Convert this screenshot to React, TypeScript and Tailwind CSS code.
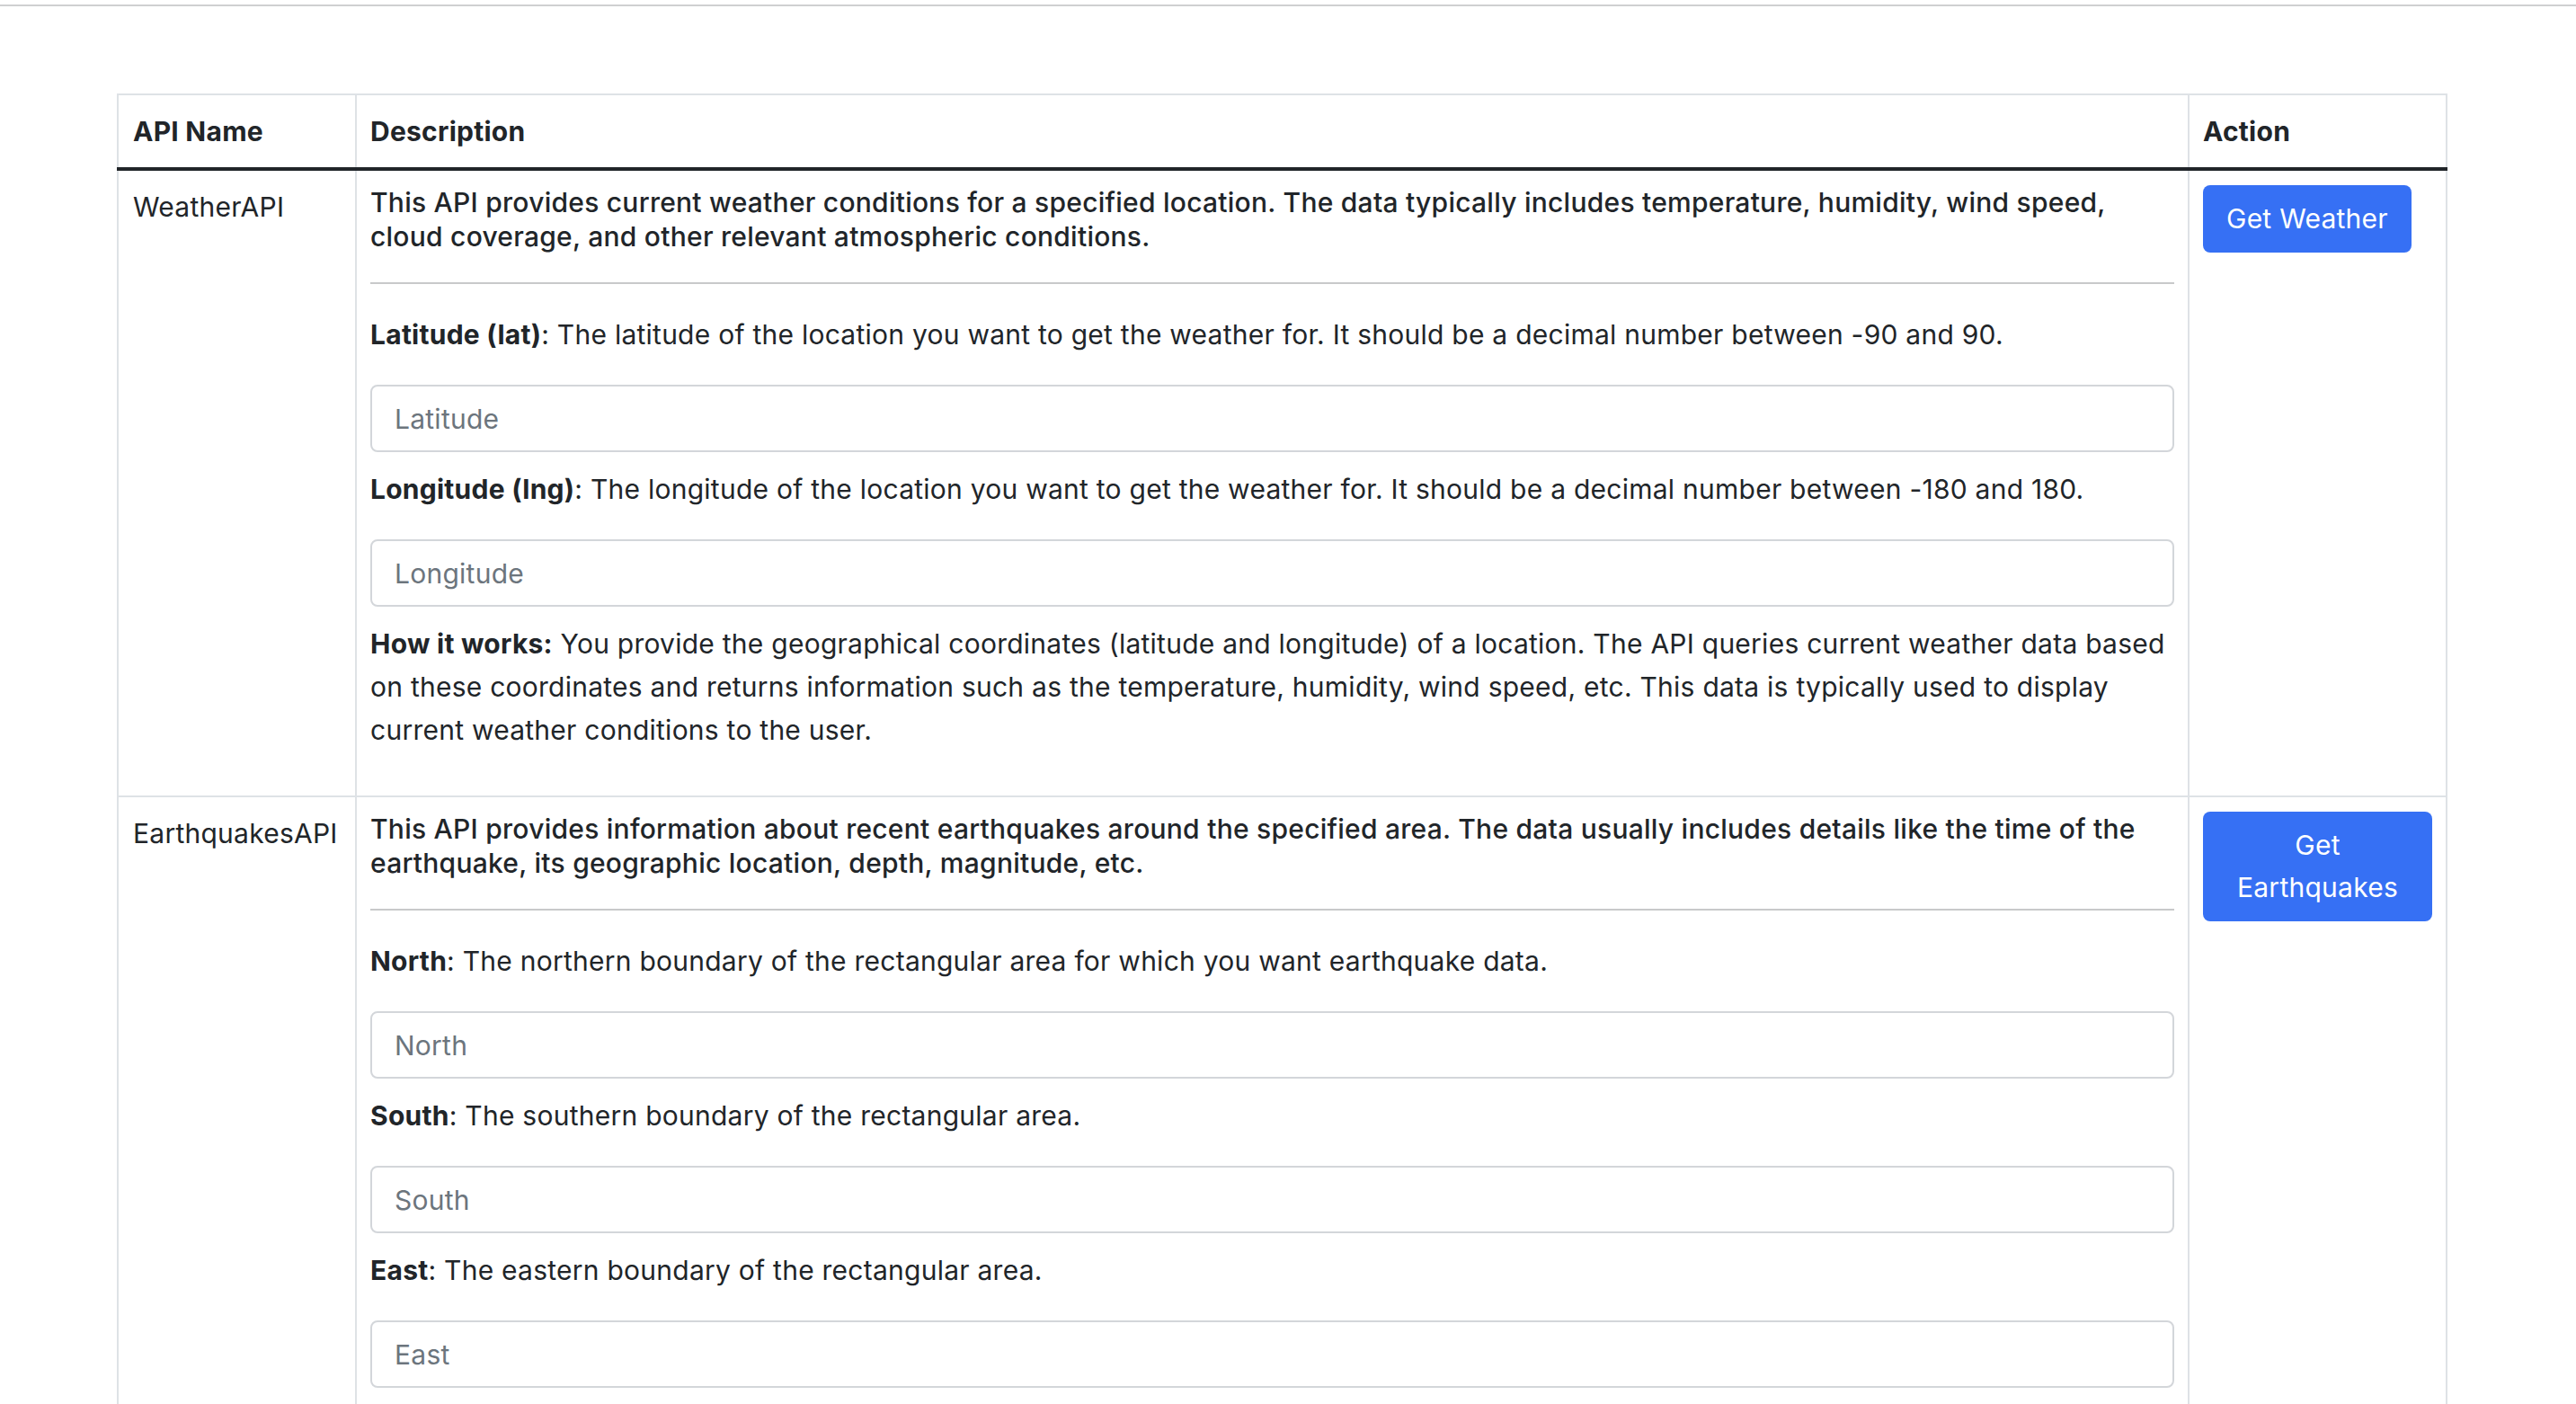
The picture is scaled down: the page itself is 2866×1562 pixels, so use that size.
const APIS = [
  {
    name: "WeatherAPI",
    action: "Get Weather",
    description:
      "This API provides current weather conditions for a specified location. The data typically includes temperature, humidity, wind speed, cloud coverage, and other relevant atmospheric conditions.",
    params: [
      {
        label: "Latitude (lat)",
        text: "The latitude of the location you want to get the weather for. It should be a decimal number between -90 and 90.",
        placeholder: "Latitude",
      },
      {
        label: "Longitude (lng)",
        text: "The longitude of the location you want to get the weather for. It should be a decimal number between -180 and 180.",
        placeholder: "Longitude",
      },
    ],
    howItWorks:
      "You provide the geographical coordinates (latitude and longitude) of a location. The API queries current weather data based on these coordinates and returns information such as the temperature, humidity, wind speed, etc. This data is typically used to display current weather conditions to the user.",
  },
  {
    name: "EarthquakesAPI",
    action: "Get Earthquakes",
    description:
      "This API provides information about recent earthquakes around the specified area. The data usually includes details like the time of the earthquake, its geographic location, depth, magnitude, etc.",
    params: [
      {
        label: "North",
        text: "The northern boundary of the rectangular area for which you want earthquake data.",
        placeholder: "North",
      },
      {
        label: "South",
        text: "The southern boundary of the rectangular area.",
        placeholder: "South",
      },
      {
        label: "East",
        text: "The eastern boundary of the rectangular area.",
        placeholder: "East",
      },
      {
        label: "West",
        text: "The western boundary of the rectangular area.",
        placeholder: "West",
      },
    ],
    howItWorks:
      "You provide the boundaries of a rectangular area. The API queries recent earthquake data within that area and returns information such as the time, location, depth and magnitude of each earthquake.",
  },
];

export default function App() {
  return (
    <div className="min-h-screen bg-white text-[#212529] font-['Inter','Liberation_Sans',sans-serif] text-[30px] tracking-[0.25px] leading-[48px]">
      <div className="mt-[5px] h-[2px] bg-[#cfd0d1]" />

      <table className="mt-[97px] ml-[130px] w-[2593px] table-fixed border-collapse">
        <thead>
          <tr>
            <th className="w-[265px] border-2 border-[#dee2e6] border-b-[4px] border-b-[#212529] px-[16px] pt-[16px] pb-[16px] text-left font-bold">
              API Name
            </th>
            <th className="border-2 border-[#dee2e6] border-b-[4px] border-b-[#212529] px-[15px] pt-[16px] pb-[16px] text-left font-bold">
              Description
            </th>
            <th className="w-[287px] border-2 border-[#dee2e6] border-b-[4px] border-b-[#212529] px-[15px] pt-[16px] pb-[16px] text-left font-bold">
              Action
            </th>
          </tr>
        </thead>
        <tbody>
          {APIS.map((api) => (
            <tr key={api.name}>
              <td className="border-2 border-[#dee2e6] px-[16px] pt-[16px] align-top">
                {api.name}
              </td>
              <td className="border-2 border-[#dee2e6] px-[15px] pt-[16px] pb-[16px] align-top">
                <h6 className="font-medium leading-[38px]">{api.description}</h6>
                <hr className="mt-[32px] mb-[32px] border-0 border-t-2 border-[#c8c9ca]" />
                {api.params.map((p) => (
                  <div key={p.label}>
                    <p>
                      <strong className="font-bold">{p.label}</strong>: {p.text}
                    </p>
                    <input
                      type="text"
                      placeholder={p.placeholder}
                      className="mt-[32px] mb-[17px] block h-[75px] w-full rounded-[8px] border-2 border-[#d3d6da] bg-white px-[25px] text-[30px] text-[#212529] placeholder:text-[#6c757d] outline-none"
                    />
                  </div>
                ))}
                <p className="mb-[33px]">
                  <strong className="font-bold">How it works:</strong> {api.howItWorks}
                </p>
              </td>
              <td className="border-2 border-[#dee2e6] px-[15px] pt-[16px] align-top">
                <button className="max-w-full rounded-[8px] bg-[#3670f4] px-[26px] py-[14px] text-center leading-[47px] text-white">
                  {api.action}
                </button>
              </td>
            </tr>
          ))}
        </tbody>
      </table>
    </div>
  );
}
